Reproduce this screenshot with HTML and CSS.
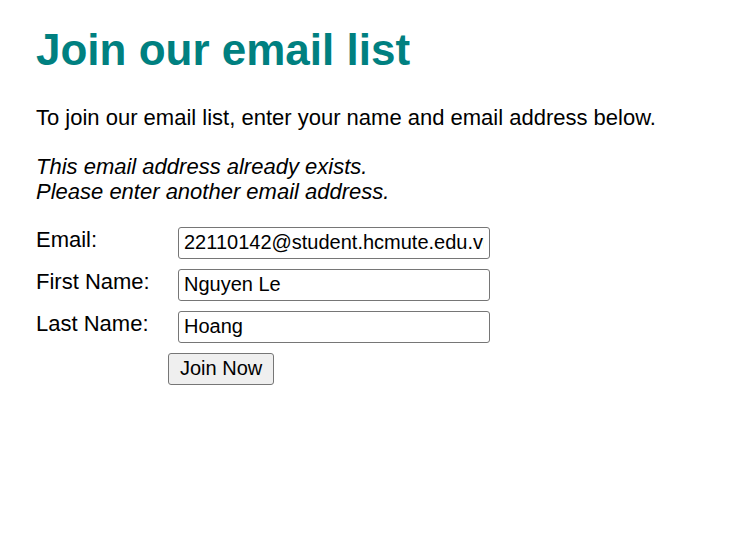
FILE: index.html
```html
<!DOCTYPE html>
<html lang="en">
<head>
<meta charset="utf-8">
<title>Murach's Java Servlets and JSP</title>
<link rel="stylesheet" href="styles.css">
</head>
<body>
<h1 class="title">Join our email list</h1>
<p class="intro">To join our email list, enter your name and email address below.</p>
<p class="message"><i>This email address already exists.<br>Please enter another email address.</i></p>
<form class="form" action="emailList" method="post">
  <label class="label">Email:</label>
  <input class="field" type="email" name="email" value="22110142@student.hcmute.edu.vn">
  <label class="label">First Name:</label>
  <input class="field" type="text" name="firstName" value="Nguyen Le">
  <label class="label">Last Name:</label>
  <input class="field" type="text" name="lastName" value="Hoang">
  <span></span>
  <input class="submit" type="submit" value="Join Now">
</form>
</body>
</html>
```
FILE: styles.css
```css
body {
  margin: 0;
  padding: 0 36px;
  font-family: "Liberation Sans", Arial, Helvetica, sans-serif;
  font-size: 22px;
  color: #000;
  background: #fff;
}
.title {
  font-size: 44px;
  line-height: 51px;
  color: #008080;
  margin: 24px 0 30px;
}
.intro {
  line-height: 25px;
  margin: 22px 0;
}
.message {
  line-height: 25px;
  margin: 24px 0 22px;
}
.form {
  margin-top: 23px;
  display: grid;
  grid-template-columns: 132px auto;
  row-gap: 10px;
  justify-items: start;
  align-items: start;
}
.label {
  line-height: 25px;
}
.field {
  margin: 0 0 0 10px;
  width: 312px;
  height: 32px;
  box-sizing: border-box;
  padding: 0 5px 2px;
  font-family: "Liberation Sans", Arial, sans-serif;
  font-size: 20px;
  color: #000;
  border: 1px solid #767676;
  border-radius: 3px;
  background: #fff;
}
.submit {
  margin: 0;
  height: 32px;
  box-sizing: border-box;
  padding: 0 11px 2px;
  font-family: "Liberation Sans", Arial, sans-serif;
  font-size: 20px;
  color: #000;
  background: #efefef;
  border: 1px solid #767676;
  border-radius: 3px;
}
```
